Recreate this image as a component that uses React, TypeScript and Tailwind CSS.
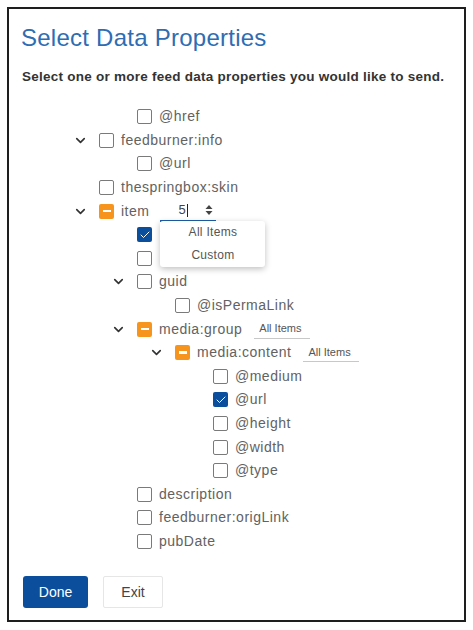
import { ChevronDown, Check } from "lucide-react";

type Row = {
  label: string;
  level: number;
  expandable?: boolean;
  state?: "off" | "on" | "mixed";
  extra?: "count" | "select";
};

// the two rows under "item" have their labels hidden by the open dropdown
const ROWS: Row[] = [
  { label: "@href", level: 1 },
  { label: "feedburner:info", level: 0, expandable: true },
  { label: "@url", level: 1 },
  { label: "thespringbox:skin", level: 0 },
  { label: "item", level: 0, expandable: true, state: "mixed", extra: "count" },
  { label: "", level: 1, state: "on" },
  { label: "", level: 1 },
  { label: "guid", level: 1, expandable: true },
  { label: "@isPermaLink", level: 2 },
  { label: "media:group", level: 1, expandable: true, state: "mixed", extra: "select" },
  { label: "media:content", level: 2, expandable: true, state: "mixed", extra: "select" },
  { label: "@medium", level: 3 },
  { label: "@url", level: 3, state: "on" },
  { label: "@height", level: 3 },
  { label: "@width", level: 3 },
  { label: "@type", level: 3 },
  { label: "description", level: 1 },
  { label: "feedburner:origLink", level: 1 },
  { label: "pubDate", level: 1 },
];

const INDENT = ["pl-[64px]", "pl-[102px]", "pl-[140px]", "pl-[178px]"];

function Box({ state = "off" }: { state?: Row["state"] }) {
  if (state === "on")
    return (
      <span className="flex h-[15px] w-[15px] flex-none items-center justify-center rounded-[2px] bg-[#0b4f9c]">
        <Check className="h-[12px] w-[12px] text-white" strokeWidth={2} />
      </span>
    );
  if (state === "mixed")
    return (
      <span className="flex h-[15px] w-[15px] flex-none items-center justify-center rounded-[2px] bg-[#f7941d]">
        <span className="h-[2.5px] w-[8px] bg-white" />
      </span>
    );
  return <span className="h-[15px] w-[15px] flex-none rounded-[2px] border-[1.5px] border-[#7a7a7a] bg-white" />;
}

function Spinner() {
  return (
    <svg width="8" height="12" viewBox="0 0 8 12" className="text-[#444]">
      <path d="M4 1 L7.5 5 H0.5 Z" fill="currentColor" />
      <path d="M4 11 L7.5 7 H0.5 Z" fill="currentColor" />
    </svg>
  );
}

export default function App() {
  return (
    <div className="bg-white p-[7px] font-['Liberation_Sans',Arial,sans-serif]">
      <div className="relative flex h-[615px] w-[459px] flex-col border-2 border-[#1e1e1e] bg-white">
        <h1 className="pl-[12px] pt-[15px] text-[24px] leading-[28px] tracking-[0.25px] text-[#2f6db3]">
          Select Data Properties
        </h1>
        <p className="mt-[16px] pl-[13px] text-[13.5px] font-bold leading-[18px] tracking-[0.25px] text-[#333]">
          Select one or more feed data properties you would like to send.
        </p>

        <div className="mt-[19px] flex flex-col">
          {ROWS.map((r, i) => (
            <div key={i} className={`relative flex h-[23.6px] items-center ${INDENT[r.level]}`}>
              <span className="flex w-[26px] flex-none items-center">
                {r.expandable && (
                  <ChevronDown className="h-[15px] w-[15px] text-[#333]" strokeWidth={2.6} />
                )}
              </span>
              <Box state={r.state} />
              <span className="ml-[7px] text-[14px] tracking-[0.5px] text-[#626262]">{r.label}</span>

              {r.extra === "count" && (
                <div className="relative ml-[11px]">
                  <div className="flex h-[21px] w-[56px] items-center justify-between border-b-2 border-[#1d5fa8] pl-[18px] pr-[3px]">
                    <span className="flex items-center text-[13px] text-[#444]">
                      5<span className="ml-[1px] h-[13px] w-px bg-[#222]" />
                    </span>
                    <Spinner />
                  </div>
                  <div className="absolute left-0 top-[20px] z-10 flex w-[105px] flex-col rounded-[3px] bg-white shadow-[0_2px_6px_rgba(0,0,0,0.25)]">
                    <span className="h-[23px] text-center text-[12px] leading-[23px] tracking-[0.3px] text-[#555]">All Items</span>
                    <span className="h-[23px] text-center text-[12px] leading-[23px] tracking-[0.3px] text-[#555]">Custom</span>
                  </div>
                </div>
              )}

              {r.extra === "select" && (
                <div className="ml-[12px] flex h-[19px] w-[56px] items-center border-b border-[#c8c8c8] pl-[5px] text-[11px] text-[#555]">
                  All Items
                </div>
              )}
            </div>
          ))}
        </div>

        <div className="mt-[23px] flex gap-[15px] pl-[14px]">
          <button className="h-[32px] w-[65px] rounded-[3px] bg-[#0b4f9c] text-[14px] text-white">
            Done
          </button>
          <button className="h-[32px] w-[60px] rounded-[2px] border border-[#e6e6e6] bg-white text-[14px] text-[#444]">
            Exit
          </button>
        </div>
      </div>
    </div>
  );
}
